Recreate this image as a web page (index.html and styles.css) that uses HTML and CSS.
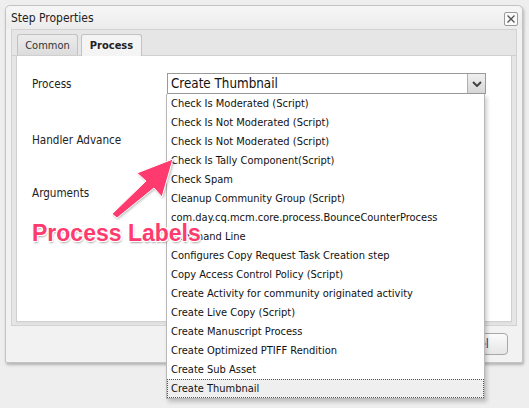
FILE: index.html
```html
<!DOCTYPE html>
<html>
<head>
<meta charset="utf-8">
<link rel="stylesheet" href="styles.css">
</head>
<body>
<div class="dialog">
  <div class="titlebar">
    <span class="title">Step Properties</span>
    <span class="close">
      <svg width="10" height="10" viewBox="0 0 10 10"><path d="M1.5 1.5 L8.5 8.5 M8.5 1.5 L1.5 8.5" stroke="#555" stroke-width="1.3" fill="none"/></svg>
    </span>
  </div>
  <div class="tabpanel">
    <div class="tabstrip">
      <div class="tab">Common</div>
      <div class="tab active">Process</div>
    </div>
    <div class="tabbody">
      <div class="row row-process">
        <div class="label">Process</div>
        <div class="combo">
          <div class="combo-value">Create Thumbnail</div>
          <div class="combo-trigger">
            <svg width="10" height="6" viewBox="0 0 10 6"><path d="M1 1 L5 5 L9 1" stroke="#444" stroke-width="2" fill="none"/></svg>
          </div>
        </div>
      </div>
      <div class="row row-handler"><div class="label">Handler Advance</div></div>
      <div class="row row-args"><div class="label">Arguments</div></div>
    </div>
  </div>
  <div class="footer">
    <div class="btn">OK</div>
    <div class="btn">Cancel</div>
  </div>
</div>

<ul class="droplist">
  <li>Check Is Moderated (Script)</li>
  <li>Check Is Not Moderated (Script)</li>
  <li>Check Is Not Moderated (Script)</li>
  <li>Check Is Tally Component(Script)</li>
  <li>Check Spam</li>
  <li>Cleanup Community Group (Script)</li>
  <li>com.day.cq.mcm.core.process.BounceCounterProcess</li>
  <li>Command Line</li>
  <li>Configures Copy Request Task Creation step</li>
  <li>Copy Access Control Policy (Script)</li>
  <li>Create Activity for community originated activity</li>
  <li>Create Live Copy (Script)</li>
  <li>Create Manuscript Process</li>
  <li>Create Optimized PTIFF Rendition</li>
  <li>Create Sub Asset</li>
  <li class="selected">Create Thumbnail</li>
</ul>

<svg class="annot-arrow" width="529" height="408" viewBox="0 0 529 408">
  <polygon points="112,214 146,181 137,173 173,159 162,197 154,188 117,218" fill="#ff3a6e" stroke="#ffffff" stroke-width="1" stroke-linejoin="round"/>
</svg>
<div class="annot-text">Process Labels</div>
</body>
</html>
```
FILE: styles.css
```css
html, body {
  margin: 0;
  padding: 0;
}
body {
  width: 529px;
  height: 408px;
  background: #eeeeee;
  font-family: "DejaVu Sans Condensed", "DejaVu Sans", sans-serif;
  font-size: 12px;
  color: #111;
  overflow: hidden;
  position: relative;
}
.dialog {
  position: relative;
  margin: 5px 0 0 5px;
  width: 516px;
  height: 356px;
  border: 1px solid #c4c4c4;
  border-radius: 5px 5px 2px 2px;
  background: #f2f2f2;
  box-shadow: 1px 2px 3px rgba(0,0,0,0.25);
  display: flex;
  flex-direction: column;
}
.titlebar {
  height: 23px;
  display: flex;
  align-items: center;
  justify-content: space-between;
  padding: 0 4px 0 5px;
  background: linear-gradient(#f6f6f6, #ececec);
  border-radius: 5px 5px 0 0;
}
.title {
  font-size: 12px;
  color: #222;
  margin-top: 1px;
}
.close {
  width: 12px;
  height: 12px;
  border: 1px solid #9a9a9a;
  border-radius: 2px;
  background: #fafafa;
  display: flex;
  align-items: center;
  justify-content: center;
  margin-top: 2px;
}
.tabpanel {
  margin: 0 5px;
  border: 1px solid #d2d2d2;
  background: #e6e6e6;
  height: 295px;
  display: flex;
  flex-direction: column;
}
.tabstrip {
  height: 25px;
  display: flex;
  align-items: flex-end;
  gap: 3px;
  padding-left: 5px;
  border-bottom: 1px solid #cfcfcf;
}
.tab {
  height: 20px;
  width: 59px;
  border: 1px solid #c2c2c2;
  border-bottom: none;
  border-radius: 3px 3px 0 0;
  background: linear-gradient(#ececec, #dcdcdc);
  display: flex;
  align-items: center;
  justify-content: center;
  color: #333;
  font-size: 11px;
}
.tab.active {
  height: 21px;
  margin-bottom: -1px;
  background: #f4f4f4;
  font-weight: bold;
  color: #222;
}
.tabbody {
  margin: 0 4px 3px;
  flex: 1;
  background: #ffffff;
  border: 1px solid #d0d0d0;
  border-top: none;
  box-shadow: 0 2px 0 #e0e0e0;
  padding: 17px 0 0 15px;
}
.row {
  display: flex;
  align-items: center;
}
.label {
  width: 135px;
  font-size: 11.6px;
  color: #222;
}
.row-process {
  height: 21px;
}
.row-handler {
  margin-top: 35px;
  height: 21px;
}
.row-args {
  margin-top: 32px;
  height: 21px;
}
.combo {
  width: 317px;
  height: 19px;
  border: 1px solid #9a9a9a;
  display: flex;
  background: #fff;
}
.combo-value {
  flex: 1;
  padding-left: 3px;
  display: flex;
  align-items: center;
  font-size: 13.3px;
  color: #111;
}
.combo-trigger {
  width: 17px;
  border-left: 1px solid #b0b0b0;
  background: linear-gradient(#f0f0f0, #d6d6d6);
  display: flex;
  align-items: center;
  justify-content: center;
}
.footer {
  flex: 1;
  display: flex;
  justify-content: flex-end;
  align-items: flex-start;
  gap: 6px;
  padding: 7px 14px 0 0;
}
.btn {
  width: 73px;
  height: 20px;
  border: 1px solid #a8a8a8;
  border-radius: 4px;
  background: linear-gradient(#fbfbfb, #e6e6e6);
  display: flex;
  align-items: center;
  justify-content: center;
  color: #15428b;
  font-size: 12px;
}
.droplist {
  position: absolute;
  left: 166px;
  top: 94px;
  width: 317px;
  margin: 0;
  padding: 0;
  list-style: none;
  background: #fff;
  border: 1px solid #b8b8b8;
  border-top: none;
  box-shadow: 2px 3px 4px rgba(0,0,0,0.2);
}
.droplist li {
  box-sizing: border-box;
  height: 19px;
  line-height: 17px;
  padding-left: 3px;
  font-size: 11px;
  color: #111;
  white-space: nowrap;
  border: 1px solid transparent;
}
.droplist li.selected {
  background: #efefef;
  border: 1px dotted #555;
}
.annot-arrow {
  position: absolute;
  left: 0;
  top: 0;
  filter: drop-shadow(1px 1px 1px rgba(0,0,0,0.25));
}
.annot-text {
  position: absolute;
  left: 32px;
  top: 220px;
  font-family: "Liberation Sans", Arial, sans-serif;
  font-weight: bold;
  font-size: 23px;
  color: #ff3a6e;
  text-shadow: -1px -1px 0 #fff, 1px -1px 0 #fff, -1px 1px 0 #fff, 1px 1px 0 #fff, 0 -1px 0 #fff, 0 1px 0 #fff, -1px 0 0 #fff, 1px 0 0 #fff, 1px 2px 2px rgba(0,0,0,0.35);
}
```
